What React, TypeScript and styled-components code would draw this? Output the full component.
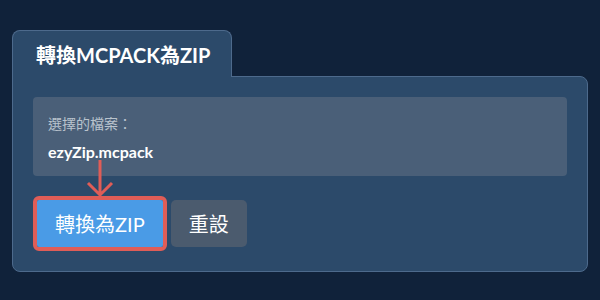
import styled, { createGlobalStyle } from "styled-components";

const GlobalStyle = createGlobalStyle`
  html, body {
    margin: 0;
    padding: 0;
    background: #10223a;
    font-family: Lato, "Noto Sans CJK TC", sans-serif;
  }
`;

const Page = styled.div`
  width: 600px;
  height: 300px;
  box-sizing: border-box;
  padding: 30px 12px 0;
  background: #10223a;
`;

const Tab = styled.div`
  position: relative;
  z-index: 1;
  display: inline-flex;
  align-items: center;
  height: 46px;
  padding: 0 21px 0 23px;
  margin-bottom: -1px;
  background: #2c4a6a;
  border: 1px solid #4d6a8c;
  border-bottom: none;
  border-radius: 8px 8px 0 0;
  color: #ffffff;
  font-size: 20px;
  font-weight: 700;
`;

const Panel = styled.div`
  display: flex;
  flex-direction: column;
  gap: 20px;
  padding: 20px;
  background: #2c4a6a;
  border: 1px solid #4d6a8c;
  border-radius: 0 8px 8px 8px;
`;

const FileBox = styled.div`
  display: flex;
  flex-direction: column;
  justify-content: center;
  gap: 9px;
  height: 79px;
  box-sizing: border-box;
  padding: 0 15px;
  background: #4a5f78;
  border-radius: 4px;
`;

const Label = styled.div`
  color: #b9c3cd;
  font-size: 14px;
`;

const FileName = styled.div`
  color: #ffffff;
  font-size: 16px;
  font-weight: 700;
`;

const Actions = styled.div`
  display: flex;
  align-items: center;
  gap: 4px;
`;

const Highlight = styled.div`
  position: relative;
  display: flex;
  border: 4px solid #e05d57;
  border-radius: 6px;
`;

const Arrow = styled.svg`
  position: absolute;
  left: 50%;
  bottom: 100%;
  width: 28px;
  height: 38px;
  margin-left: -14px;
  margin-bottom: 2px;
  overflow: visible;
`;

const Button = styled.button<{ $variant: "primary" | "secondary" }>`
  height: 47px;
  padding: 0 18px;
  border: none;
  border-radius: ${(p) => (p.$variant === "primary" ? "2px" : "5px")};
  background: ${(p) => (p.$variant === "primary" ? "#4a9be6" : "#4b5b6e")};
  color: #ffffff;
  font-family: Lato, "Noto Sans CJK TC", sans-serif;
  font-size: 20px;
  font-weight: 400;
  cursor: pointer;
`;

export default function App() {
  return (
    <>
      <GlobalStyle />
      <Page>
        <Tab>轉換MCPACK為ZIP</Tab>
        <Panel>
          <FileBox>
            <Label>選擇的檔案：</Label>
            <FileName>ezyZip.mcpack</FileName>
          </FileBox>
          <Actions>
            <Highlight>
              <Arrow viewBox="0 0 28 38">
                <path
                  d="M14 0 V35 M2 23 L14 35 L26 23"
                  fill="none"
                  stroke="#e05d57"
                  strokeWidth="3"
                />
              </Arrow>
              <Button $variant="primary">轉換為ZIP</Button>
            </Highlight>
            <Button $variant="secondary">重設</Button>
          </Actions>
        </Panel>
      </Page>
    </>
  );
}
